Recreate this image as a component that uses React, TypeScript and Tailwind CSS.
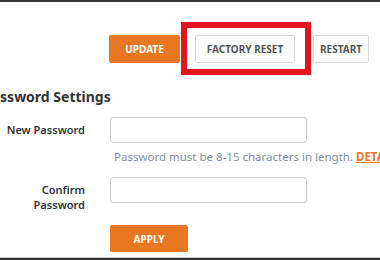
import React from "react";

export default function App() {
  return (
    <div className="w-[380px] h-[260px] bg-white overflow-hidden flex flex-col" style={{ fontFamily: '"Noto Sans", "Open Sans", Arial, sans-serif' }}>
      <div className="h-[2px] bg-[#333333] shrink-0" />
      <div className="flex-1 flex flex-col">
        <div className="flex items-center pl-[109px] mt-[33px] h-[28px]">
          <button className="w-[71px] h-[28px] bg-[#e87722] rounded-[2px] text-white text-[10px] font-bold leading-none">UPDATE</button>
          <div className="relative ml-[15px]">
            <button className="w-[100px] h-[28px] bg-white border border-[#dcdcdc] rounded-[2px] text-[#555555] text-[10px] font-bold leading-none">FACTORY RESET</button>
            <div className="absolute left-[-14px] right-[-16px] top-[-13px] bottom-[-12px] border-[6px] border-[#e3141f] pointer-events-none" />
          </div>
          <button className="ml-[18px] w-[56px] h-[28px] bg-white border border-[#dcdcdc] rounded-[2px] text-[#555555] text-[10px] font-bold leading-none">RESTART</button>
        </div>
        <div className="mt-[22px] ml-[-17px] text-[14px] font-bold text-[#333333] leading-[24px] whitespace-nowrap">Password Settings</div>
        <div className="mt-[8px] grid grid-cols-[85px_197px] gap-x-[25px] items-start">
          <div className="flex items-center justify-end h-[26px] text-[11px] font-semibold text-[#333333] whitespace-nowrap">New Password</div>
          <input className="h-[26px] border border-[#cfcfcf] rounded-[3px] bg-white" />
          <div />
          <div className="mt-[6px] ml-[4px] h-[15px] text-[11.5px] leading-[15px] text-[#7d8ea3] whitespace-nowrap">
            Password must be 8-15 characters in length. <span className="text-[#e87722] font-bold underline">DETAILS</span>
          </div>
          <div className="mt-[13px] pt-[5px] text-right text-[11px] font-semibold text-[#333333] leading-[15px]">Confirm<br />Password</div>
          <input className="mt-[13px] h-[26px] border border-[#cfcfcf] rounded-[3px] bg-white" />
          <div />
          <button className="mt-[13px] w-[78px] h-[27px] bg-[#e87722] rounded-[2px] text-white text-[10px] font-bold leading-none">APPLY</button>
        </div>
      </div>
      <div className="h-[1px] bg-[#cccccc] shrink-0" />
      <div className="h-[2px] bg-[#333333] shrink-0" />
    </div>
  );
}
